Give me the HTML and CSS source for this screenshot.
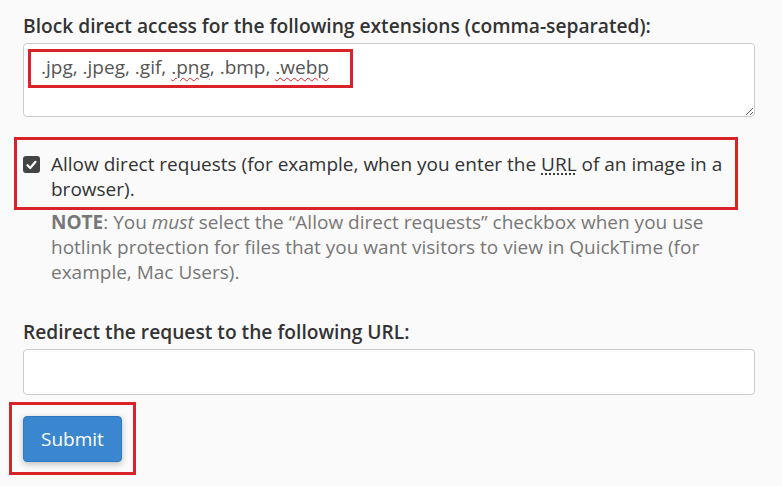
FILE: index.html
```html
<html>
    <head>
        <link rel="stylesheet" href="styles.css">
    </head>
    <body>
        <form class="hotlink-form">
            <div class="form-group">
                <label for="extensions" class="field-label">Block direct access for the following extensions (comma-separated):</label>
                <div class="textarea-wrap">
                    <textarea id="extensions" class="form-control textarea" spellcheck="false"></textarea>
                    <div class="ext-value"><span>.jpg, .jpeg, .gif, <span class="misspelled">.png</span>, .bmp, <span class="misspelled">.webp</span></span></div>
                </div>
            </div>

            <div class="highlight check-box">
                <label class="check-row">
                    <span class="checkbox"><svg width="11" height="10" viewBox="0 0 11 10"><path d="M1.5 5.2 L4.2 8 L9.5 1.8" fill="none" stroke="#fff" stroke-width="2.2" stroke-linecap="round" stroke-linejoin="round"/></svg></span>
                    <span class="check-text">Allow direct requests (for example, when you enter the <abbr title="Uniform Resource Locator">URL</abbr> of an image in a browser).</span>
                </label>
            </div>
            <p class="note"><strong>NOTE</strong>: You <em>must</em> select the “Allow direct requests” checkbox when you use hotlink protection for files that you want visitors to view in QuickTime (for example, Mac Users).</p>

            <div class="form-group redirect">
                <label for="redirect" class="field-label">Redirect the request to the following URL:</label>
                <input type="text" id="redirect" class="form-control">
            </div>

            <div class="highlight submit-box">
                <a class="btn btn-primary">Submit</a>
            </div>
        </form>
    </body>
</html>
```

FILE: styles.css
```css
body {
    margin: 0;
    background-color: #fafafa;
    font-family: "Open Sans", sans-serif;
    font-size: 19px;
    color: #333;
}

.hotlink-form {
    padding: 13px 27px 0 23px;
}

.field-label {
    display: block;
    font-size: 19.2px;
    font-weight: 600;
    line-height: 25px;
    margin-bottom: 5px;
}

.form-control {
    display: block;
    width: 100%;
    box-sizing: border-box;
    background-color: #fff;
    border: 1px solid #ccc;
    border-radius: 4px;
    font-family: "Open Sans", sans-serif;
    font-size: 19px;
    color: #555;
}

.textarea-wrap {
    position: relative;
}

.textarea {
    height: 74px;
    resize: vertical;
}

.ext-value {
    position: absolute;
    left: 5px;
    top: 6px;
    width: 309px;
    height: 33px;
    border: 3px solid #d9232a;
    padding-left: 10px;
    line-height: 31px;
    color: #555;
}

.misspelled {
    text-decoration: underline wavy #e02020;
    text-decoration-thickness: 1px;
    text-underline-offset: 3px;
}

.highlight {
    border: 3px solid #d9232a;
}

.check-box {
    margin: 20px 17px 0 -9px;
    padding: 12px 10px 5px 6px;
}

.check-row {
    display: flex;
    align-items: flex-start;
    gap: 11px;
    line-height: 25px;
}

.checkbox {
    flex: none;
    width: 17px;
    height: 17px;
    margin-top: 4px;
    border-radius: 3px;
    background-color: #444;
    display: flex;
    align-items: center;
    justify-content: center;
}

abbr {
    text-decoration: underline dotted;
    text-underline-offset: 3px;
}

.note {
    margin: 0 20px 0 28px;
    line-height: 25px;
    color: #777;
}

.redirect {
    margin-top: 34px;
}

.redirect .form-control {
    height: 46px;
}

.submit-box {
    display: inline-block;
    margin: 7px 0 0 -14px;
    padding: 11px 11px 10px 11px;
}

.btn {
    display: inline-block;
    border-radius: 4px;
    padding: 0 17px;
    line-height: 44px;
    border: 1px solid #2f7abf;
    cursor: pointer;
}

.btn-primary {
    color: #fff;
    background-color: #3a87cf;
    box-shadow: 0 2px 6px rgba(0, 0, 0, .25);
}
```
